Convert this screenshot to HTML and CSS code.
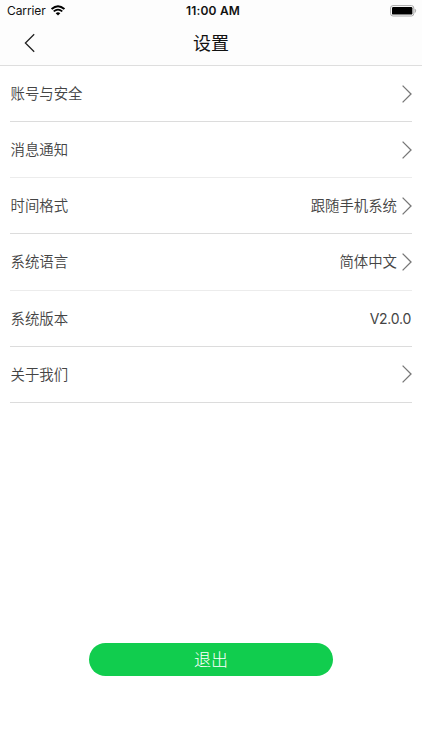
FILE: index.html
```html
<!DOCTYPE html>
<html lang="zh-CN">
<head>
    <meta charset="UTF-8">
    <meta name="viewport" content="width=device-width, initial-scale=1.0">
    <title>设置</title>
    <link rel="stylesheet" href="styles.css">
</head>
<body>
    <!-- 状态栏 -->
    <div class="status-bar">
        <div class="carrier">
            <span>Carrier</span>
            <svg class="wifi" width="14" height="11" viewBox="0 0 14 11">
                <path d="M0.6 4.1 Q7 -1.6 13.4 4.1" fill="none" stroke="#000" stroke-width="2"/>
                <path d="M2.7 6.4 Q7 2.8 11.3 6.4" fill="none" stroke="#000" stroke-width="1.8"/>
                <path d="M4.7 8.3 Q7 6.3 9.3 8.3 L7 10.6 Z" fill="#000"/>
            </svg>
        </div>
        <div class="time">11:00 AM</div>
        <div class="battery">
            <svg width="27" height="12" viewBox="0 0 27 12">
                <rect x="0.6" y="0.6" width="23.2" height="10.4" rx="2.4" fill="#fff" stroke="#a9a9a9" stroke-width="1"/>
                <rect x="2" y="2" width="20.4" height="7.6" rx="1.2" fill="#000"/>
                <path d="M25 4 Q26.6 5.8 25 7.6 Z" fill="#a0a0a0" stroke="#a0a0a0" stroke-width="0.5"/>
            </svg>
        </div>
    </div>

    <!-- 导航栏 -->
    <div class="nav-bar">
        <svg class="back" width="12" height="20" viewBox="0 0 12 20">
            <path d="M10.2 1.2 L1.4 10 L10.2 18.8" fill="none" stroke="#222" stroke-width="1.3"/>
        </svg>
        <h1 class="title">设置</h1>
    </div>

    <!-- 设置列表 -->
    <ul class="settings">
        <li class="item">
            <span class="label">账号与安全</span>
            <svg class="arrow" viewBox="0 0 10 18"><path d="M0.6 0.6 L9 9 L0.6 17.4"/></svg>
        </li>
        <li class="item">
            <span class="label">消息通知</span>
            <svg class="arrow" viewBox="0 0 10 18"><path d="M0.6 0.6 L9 9 L0.6 17.4"/></svg>
        </li>
        <li class="item">
            <span class="label">时间格式</span>
            <span class="value">跟随手机系统</span>
            <svg class="arrow" viewBox="0 0 10 18"><path d="M0.6 0.6 L9 9 L0.6 17.4"/></svg>
        </li>
        <li class="item">
            <span class="label">系统语言</span>
            <span class="value">简体中文</span>
            <svg class="arrow" viewBox="0 0 10 18"><path d="M0.6 0.6 L9 9 L0.6 17.4"/></svg>
        </li>
        <li class="item">
            <span class="label">系统版本</span>
            <span class="value version">V2.0.0</span>
        </li>
        <li class="item">
            <span class="label">关于我们</span>
            <svg class="arrow" viewBox="0 0 10 18"><path d="M0.6 0.6 L9 9 L0.6 17.4"/></svg>
        </li>
    </ul>

    <button class="logout">退出</button>
</body>
</html>
```
FILE: styles.css
```css
* {
    box-sizing: border-box;
}
body {
    margin: 0;
    height: 750px;
    display: flex;
    flex-direction: column;
    font-family: Inter, "Noto Sans CJK SC", sans-serif;
    background-color: #fff;
    color: #444;
}
/* 状态栏 */
.status-bar {
    display: grid;
    grid-template-columns: 1fr auto 1fr;
    align-items: center;
    height: 22px;
    padding: 0 5px 1px 7px;
    background-color: #fdfdfd;
    color: #111;
    font-size: 12px;
}
.carrier {
    display: flex;
    align-items: center;
    gap: 5px;
    letter-spacing: -0.1px;
}
.time {
    padding-left: 2px;
    font-weight: 600;
    letter-spacing: 0.2px;
}
.battery {
    display: flex;
    justify-content: flex-end;
}
/* 导航栏 */
.nav-bar {
    display: grid;
    grid-template-columns: 1fr auto 1fr;
    align-items: center;
    height: 44px;
    padding: 0 24px;
    border-bottom: 1px solid #dedede;
    background-color: #fdfdfd;
}
.back {
    margin-bottom: 2px;
}
.title {
    margin: 0;
    color: #111;
    font-size: 18px;
    font-weight: 400;
    line-height: 24px;
}
/* 设置列表 */
.settings {
    margin: 0;
    padding: 0 10px;
    list-style: none;
}
.item {
    display: flex;
    align-items: center;
    height: 56.15px;
    border-bottom: 1px solid #dcdcdc;
    font-size: 14.4px;
    font-weight: 350;
}
.item:nth-child(2),
.item:nth-child(4) {
    border-bottom-color: #ececec;
}
.label,
.value {
    padding-bottom: 2px;
}
.label {
    padding-left: 0.5px;
}
.value {
    margin-left: auto;
}
.version {
    padding: 0 1px 0 0;
    font-size: 14px;
    font-weight: 400;
    letter-spacing: -0.25px;
}
.arrow {
    width: 10px;
    height: 18px;
    margin-left: auto;
    fill: none;
    stroke: #777;
    stroke-width: 1.3;
}
.value + .arrow {
    margin-left: 5px;
}
/* 退出按钮 */
.logout {
    width: 244px;
    height: 33px;
    margin: auto auto 74px 89px;
    padding: 0;
    border: none;
    border-radius: 17px;
    background-color: #11cd4e;
    color: #fff;
    font-family: inherit;
    font-size: 17px;
    font-weight: 300;
    line-height: 34px;
}
```
